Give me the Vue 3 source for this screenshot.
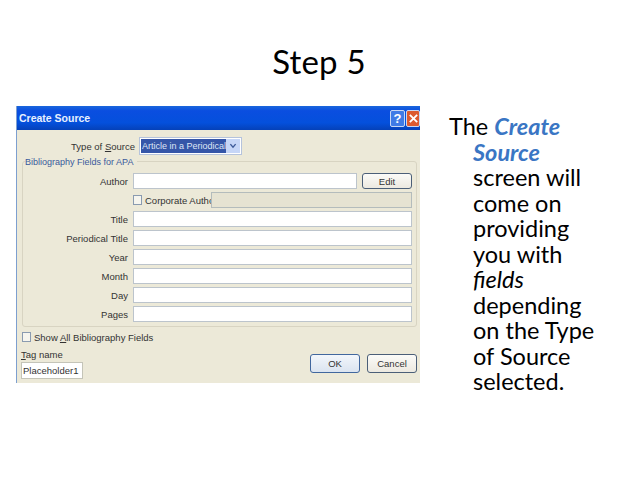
<script setup>
const fields = [
  { label: 'Author', edit: true },
  { corporate: true },
  { label: 'Title' },
  { label: 'Periodical Title' },
  { label: 'Year' },
  { label: 'Month' },
  { label: 'Day' },
  { label: 'Pages' }
]
</script>

<template>
  <div class="slide">
    <h1 class="heading">Step 5</h1>
    <div class="content">
      <div class="dialog">
        <div class="titlebar">
          <span class="title-text">Create Source</span>
          <span class="win-btn help">?</span>
          <span class="win-btn close">
            <svg viewBox="0 0 12 12" width="11" height="11"><path d="M2 2 L10 10 M10 2 L2 10" stroke="#fff" stroke-width="2" fill="none" /></svg>
          </span>
        </div>
        <div class="body">
          <div class="type-row">
            <span class="type-label">Type of <u>S</u>ource</span>
            <div class="select">
              <span class="select-value">Article in a Periodical</span>
              <span class="select-arrow">
                <svg viewBox="0 0 10 8" width="8" height="6"><path d="M1.5 1.5 L5 5.5 L8.5 1.5" stroke="#3d5a98" stroke-width="1.8" fill="none" /></svg>
              </span>
            </div>
          </div>
          <div class="group">
            <span class="legend">Bibliography Fields for APA</span>
            <template v-for="(f, i) in fields" :key="i">
              <div v-if="f.corporate" class="row">
                <span class="label"></span>
                <div class="corp">
                  <span class="check"></span>
                  <span class="corp-label">Corporate Author</span>
                  <span class="disabled-input"></span>
                </div>
              </div>
              <div v-else class="row">
                <span class="label">{{ f.label }}</span>
                <span class="input"></span>
                <span v-if="f.edit" class="btn edit">Edit</span>
              </div>
            </template>
          </div>
          <div class="footer">
            <div class="footer-left">
              <div class="show-all">
                <span class="check"></span>
                <span>Show <u>A</u>ll Bibliography Fields</span>
              </div>
              <div class="tag-label"><u>T</u>ag name</div>
              <div class="tag-input">Placeholder1</div>
            </div>
            <div class="footer-btns">
              <span class="btn ok">OK</span>
              <span class="btn cancel">Cancel</span>
            </div>
          </div>
        </div>
      </div>
      <p class="copy">The <b><i>Create<br />Source</i></b><br />screen will<br />come on<br />providing<br />you with<br /><i>fields</i><br />depending<br />on the Type<br />of Source<br />selected.</p>
    </div>
  </div>
</template>

<style>
body { margin: 0; background: #fff; }
</style>

<style scoped>
.slide {
  width: 638px;
  height: 479px;
  overflow: hidden;
  background: #fff;
  font-family: Lato, "Open Sans", sans-serif;
  color: #000;
}
.heading {
  margin: 0;
  padding-top: 41px;
  height: 65px;
  box-sizing: content-box;
  text-align: center;
  font-size: 33px;
  line-height: 40px;
  font-weight: 400;
  letter-spacing: 0.2px;
}
.content {
  display: flex;
  padding-left: 16px;
}
.dialog {
  width: 404px;
  height: 277px;
  flex: none;
  display: flex;
  flex-direction: column;
  background: #ece9d8;
  border-left: 1px solid #7d9fd0;
  box-sizing: border-box;
  font-family: "Liberation Sans", Arial, sans-serif;
  font-size: 9.5px;
  color: #333;
}
.titlebar {
  height: 24px;
  flex: none;
  display: flex;
  align-items: center;
  gap: 1px;
  padding: 0 0 0 2px;
  background: linear-gradient(#1a66dc, #0a4ee0 20%, #0450dc 70%, #0541b8);
}
.title-text {
  flex: 1;
  color: #e8f0ff;
  font-size: 10.5px;
  font-weight: 700;
}
.win-btn {
  width: 14px;
  height: 17px;
  display: flex;
  align-items: center;
  justify-content: center;
  border-radius: 2px;
  color: #fff;
  font-size: 13px;
  font-weight: 700;
  border: 1px solid #c8d8f4;
  box-sizing: border-box;
}
.help { background: #3f7be6; width: 15px; }
.close { background: #dc5a30; }
.body {
  flex: 1;
  display: flex;
  flex-direction: column;
  padding: 0 3px 0 5px;
}
.type-row {
  display: flex;
  align-items: center;
  height: 31px;
  flex: none;
  padding-top: 1px;
  box-sizing: border-box;
}
.type-label { width: 113px; text-align: right; flex: none; }
.select {
  margin-left: 4px;
  width: 100px;
  height: 17px;
  display: flex;
  align-items: center;
  background: #fff;
  border: 1px solid #b5c3dc;
  padding: 1px;
  box-sizing: content-box;
  width: 99px;
  height: 14px;
}
.select-value {
  flex: 1;
  height: 100%;
  background: #3556a8;
  color: #dfe6f5;
  font-size: 9px;
  line-height: 14px;
  padding-left: 1px;
  white-space: nowrap;
  overflow: hidden;
}
.select-arrow {
  width: 14px;
  height: 100%;
  flex: none;
  display: flex;
  align-items: center;
  justify-content: center;
  background: #c6d6f7;
}
.group {
  position: relative;
  height: 166px;
  flex: none;
  box-sizing: border-box;
  border: 1px solid #d8d4c2;
  border-radius: 3px;
  padding-top: 11px;
  display: flex;
  flex-direction: column;
  gap: 3px;
  margin-left: 0;
}
.legend {
  position: absolute;
  left: 2px;
  top: -5px;
  background: #ece9d8;
  padding-right: 4px;
  color: #3a5a9c;
  font-size: 9px;
  line-height: 11px;
}
.row {
  display: flex;
  align-items: center;
  height: 16px;
  flex: none;
}
.label {
  width: 105px;
  flex: none;
  text-align: right;
}
.input {
  flex: 1;
  height: 16px;
  margin-left: 5px;
  margin-right: 4px;
  background: #fff;
  border: 1px solid #bcc4cc;
  box-sizing: border-box;
}
.btn {
  display: flex;
  align-items: center;
  justify-content: center;
  box-sizing: border-box;
  border: 1px solid #4b5f78;
  border-radius: 3px;
  background: linear-gradient(#fbfbf8, #ece9e0);
  color: #333;
}
.edit {
  width: 50px;
  height: 16px;
  margin-right: 4px;
  margin-left: 1px;
}
.corp {
  flex: 1;
  margin-left: 5px;
  margin-right: 4px;
  display: flex;
  align-items: center;
}
.check {
  width: 9px;
  height: 10px;
  flex: none;
  background: #f6f5ee;
  border: 1px solid #8a9bb0;
  box-sizing: border-box;
}
.corp-label { margin-left: 3px; width: 65px; flex: none; white-space: nowrap; }
.disabled-input {
  flex: 1;
  height: 16px;
  margin-left: 1px;
  background: #e6e3d2;
  border: 1px solid #b4bcbc;
  box-sizing: border-box;
}
.footer {
  flex: 1;
  display: flex;
  justify-content: space-between;
}
.footer-left { padding-top: 4px; }
.show-all {
  display: flex;
  align-items: center;
  gap: 3px;
  height: 12px;
  white-space: nowrap;
}
.tag-label { margin-top: 6px; line-height: 11px; margin-left: -1px; }
.tag-input {
  margin-top: 2px;
  margin-left: -1px;
  width: 62px;
  height: 17px;
  line-height: 15px;
  box-sizing: border-box;
  background: #fff;
  border: 1px solid #c4c4b8;
  padding-left: 1px;
}
.footer-btns {
  display: flex;
  gap: 7px;
  padding-top: 27px;
  margin-right: 0;
}
.footer-btns .btn { width: 50px; height: 19px; }
.ok { border-color: #41679e; background: linear-gradient(#f2f6fb, #dbe4f0); }
.copy {
  margin: 8px 0 0 29px;
  padding-left: 24px;
  text-indent: -24px;
  font-size: 23.5px;
  line-height: 25.55px;
  white-space: nowrap;
}
.copy b { color: #3a76c4; }
</style>
